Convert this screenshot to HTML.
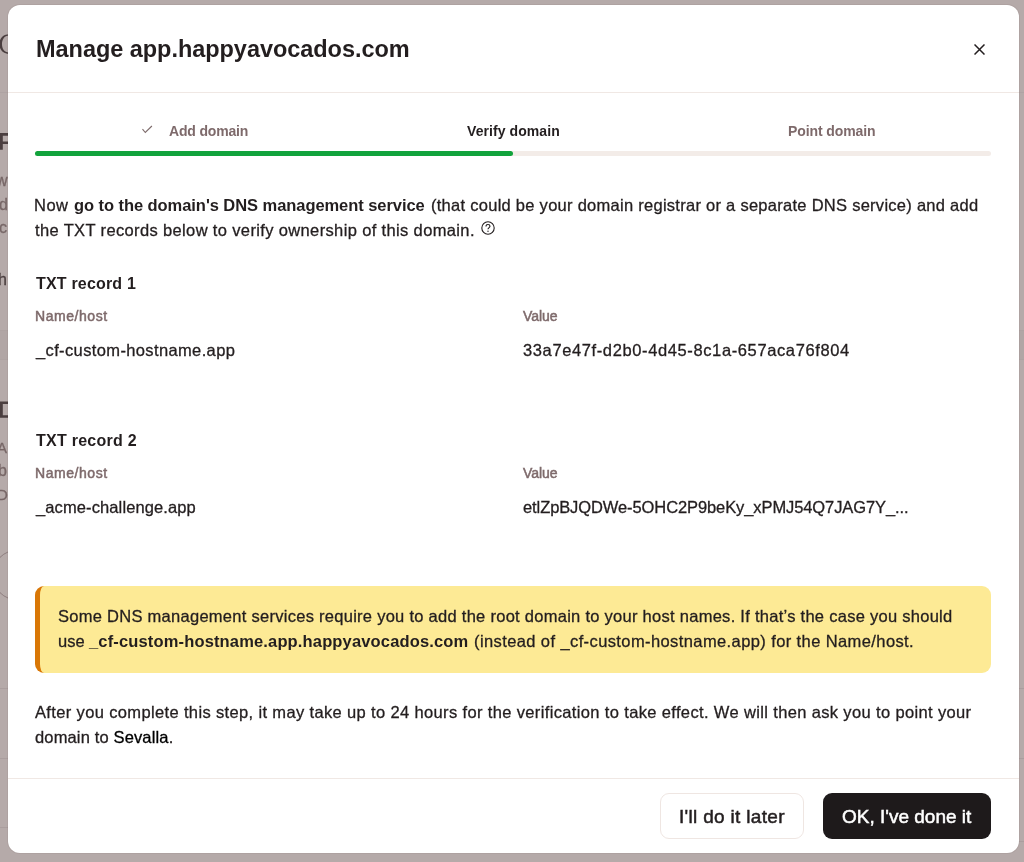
<!DOCTYPE html>
<html><head><meta charset="utf-8">
<style>
html,body{margin:0;padding:0;width:1024px;height:862px;overflow:hidden;background:#b5aaa9;font-family:"Liberation Sans",sans-serif;}
.abs{position:absolute;white-space:nowrap;}
.bg{position:absolute;left:0;top:0;width:1024px;height:862px;}
.modal{position:absolute;left:8px;top:5px;width:1011px;height:848px;background:#fff;border-radius:12px;overflow:hidden;box-shadow:0 0 0 1px rgba(90,60,60,0.07);}
.t{position:absolute;white-space:nowrap;line-height:1;will-change:transform;}
.rg{font-weight:normal;-webkit-text-stroke:0.3px currentColor;}
.md{font-weight:normal;-webkit-text-stroke:0.5px currentColor;}
.bd{font-weight:bold;}
</style></head><body>
<div class="bg">
  <div class="abs" style="left:0;top:92px;width:1024px;height:1px;background:#aea3a3"></div>
  <div class="abs" style="left:0;top:330px;width:1024px;height:30px;background:#b1a6a5"></div>
  <div class="abs" style="left:0;top:330px;width:1024px;height:1px;background:#aea3a2"></div>
  <div class="abs" style="left:0;top:359px;width:1024px;height:1px;background:#aea3a2"></div>
  <div class="abs" style="left:0;top:688px;width:1024px;height:1px;background:#aa9e9e"></div>
  <div class="abs" style="left:0;top:758px;width:1024px;height:1px;background:#aa9e9e"></div>
  <div class="abs" style="left:0;top:827px;width:20px;height:1px;background:#aa9e9e"></div>
  <div class="abs" style="left:1000px;top:841px;width:24px;height:1px;background:#aa9e9e"></div>
  <svg class="abs" style="left:0;top:0" width="20" height="862" viewBox="0 0 20 862">
    <path d="M9 34.2C2.5 34.4 -0.6 39 -0.6 44S2.5 53.6 9 53.8V52.6C4.2 52.4 2 48.5 2 44S4.2 35.6 9 35.4Z" fill="#4a3e3f"/>
    <path d="M0 133H9V135.8H2.8V141.4H9V144H2.8V149.7H0Z" fill="#4a3e3f"/>
    <path d="M0 401.5H9V404H2.8V415.3H9V417.7H0Z" fill="#4a3e3f"/>
    <circle cx="17.7" cy="575" r="25" stroke="#8e7e7f" stroke-width="1" fill="none"/>
  </svg>
  <div class="abs" style="left:-4px;top:173px;font-size:16px;line-height:1;will-change:transform;-webkit-text-stroke:0.3px currentColor;color:#776767">w</div>
  <div class="abs" style="left:-1px;top:197px;font-size:16px;line-height:1;will-change:transform;-webkit-text-stroke:0.3px currentColor;color:#776767">d</div>
  <div class="abs" style="left:-1px;top:220px;font-size:16px;line-height:1;will-change:transform;-webkit-text-stroke:0.3px currentColor;color:#776767">c</div>
  <div class="abs" style="left:-2px;top:272px;font-size:16px;line-height:1;will-change:transform;-webkit-text-stroke:0.3px currentColor;color:#4a3e3f">h</div>
  <div class="abs" style="left:-3px;top:440px;font-size:15px;line-height:1;will-change:transform;-webkit-text-stroke:0.3px currentColor;color:#776767">A</div>
  <div class="abs" style="left:-2px;top:463px;font-size:16px;line-height:1;will-change:transform;-webkit-text-stroke:0.3px currentColor;color:#776767">b</div>
  <div class="abs" style="left:-3px;top:487px;font-size:15px;line-height:1;will-change:transform;-webkit-text-stroke:0.3px currentColor;color:#776767">D</div>
</div>
<div class="modal">
  <svg class="abs" style="left:966px;top:39px" width="11" height="11" viewBox="0 0 11 11"><path d="M0.5 0.5L10.5 10.5M10.5 0.5L0.5 10.5" stroke="#231e1f" stroke-width="1.5" fill="none"/></svg>
  <div class="abs" style="left:0;top:87px;width:1011px;height:1px;background:#f0e8e4"></div>
  <svg class="abs" style="left:134px;top:120px" width="11" height="9" viewBox="0 0 11 9"><path d="M0.5 4.2L3.3 7.5L9.9 1" stroke="#7f6d6d" stroke-width="1.15" fill="none"/></svg>
  <div class="abs" style="left:27px;top:146px;width:956px;height:5px;border-radius:3px;background:#f3ece8"></div>
  <div class="abs" style="left:27px;top:146px;width:478px;height:5px;border-radius:3px;background:#12a33c"></div>
  <svg class="abs" style="left:472.5px;top:216.3px" width="14" height="14" viewBox="0 0 14 14"><circle cx="7" cy="7" r="6.2" stroke="#231e1f" stroke-width="1.1" fill="none"/><path d="M5 5.4C5 4.2 5.9 3.5 7 3.5S9 4.2 9 5.3C9 6.5 7 6.7 7 8.3" stroke="#231e1f" stroke-width="1.1" fill="none"/><circle cx="7" cy="10.2" r="0.7" fill="#231e1f"/></svg>
  <div class="abs" style="left:27px;top:581px;width:951px;height:87px;border-radius:9px;background:#fdea95;border-left:5px solid #d97706"></div>
  <div class="abs" style="left:0;top:773px;width:1011px;height:1px;background:#f0e8e4"></div>
  <div class="abs" style="left:652px;top:788px;width:142px;height:44px;border:1px solid #efe6e2;border-radius:9px;background:#fff"></div>
  <div class="abs" style="left:815px;top:788px;width:168px;height:46px;border-radius:9px;background:#1e1a1b"></div>
  <div class="t bd" id="title" style="left:27.61px;top:32.61px;font-size:23.5px;color:#231e1f;letter-spacing:-0.041px">Manage app.happyavocados.com</div>
  <div class="t bd" id="s1" style="left:160.62px;top:118.91px;font-size:14px;color:#7e6a6b;letter-spacing:-0.179px">Add domain</div>
  <div class="t bd" id="s2" style="left:459.00px;top:118.91px;font-size:14px;color:#231e1f;letter-spacing:0.075px">Verify domain</div>
  <div class="t bd" id="s3" style="left:779.59px;top:118.91px;font-size:14px;color:#7e6a6b;letter-spacing:-0.106px">Point domain</div>
  <div class="t rg" id="p1a" style="left:26.40px;top:191.61px;font-size:16.5px;color:#231e1f;letter-spacing:0.470px">Now</div>
  <div class="t bd" id="p1b" style="left:66.30px;top:191.61px;font-size:16.5px;color:#231e1f;letter-spacing:-0.064px">go to the domain's DNS management service</div>
  <div class="t rg" id="p1c" style="left:422.54px;top:191.61px;font-size:16.5px;color:#231e1f;letter-spacing:0.270px">(that could be your domain registrar or a separate DNS service) and add</div>
  <div class="t rg" id="p2" style="left:27.25px;top:216.81px;font-size:16.5px;color:#231e1f;letter-spacing:0.358px">the TXT records below to verify ownership of this domain.</div>
  <div class="t bd" id="r1" style="left:28.00px;top:270.91px;font-size:16px;color:#231e1f;letter-spacing:0.181px">TXT record 1</div>
  <div class="t md" id="n1" style="left:26.58px;top:303.90px;font-size:14px;color:#7e6a6b;letter-spacing:0.547px">Name/host</div>
  <div class="t md" id="v1" style="left:515.00px;top:303.90px;font-size:14px;color:#7e6a6b;letter-spacing:-0.030px">Value</div>
  <div class="t rg" id="nv1" style="left:28.28px;top:336.81px;font-size:16.5px;color:#231e1f;letter-spacing:0.369px">_cf-custom-hostname.app</div>
  <div class="t rg" id="vv1" style="left:515.00px;top:337.10px;font-size:16.5px;color:#231e1f;letter-spacing:0.617px">33a7e47f-d2b0-4d45-8c1a-657aca76f804</div>
  <div class="t bd" id="r2" style="left:28.00px;top:428.11px;font-size:16px;color:#231e1f;letter-spacing:0.263px">TXT record 2</div>
  <div class="t md" id="n2" style="left:26.58px;top:460.81px;font-size:14px;color:#7e6a6b;letter-spacing:0.547px">Name/host</div>
  <div class="t md" id="v2" style="left:515.00px;top:460.81px;font-size:14px;color:#7e6a6b;letter-spacing:-0.030px">Value</div>
  <div class="t rg" id="nv2" style="left:28.28px;top:493.60px;font-size:16.5px;color:#231e1f;letter-spacing:0.111px">_acme-challenge.app</div>
  <div class="t rg" id="vv2" style="left:515.00px;top:493.81px;font-size:16.5px;color:#231e1f;letter-spacing:-0.095px">etlZpBJQDWe-5OHC2P9beKy_xPMJ54Q7JAG7Y_...</div>
  <div class="t rg" id="w1" style="left:49.72px;top:602.91px;font-size:16.5px;color:#231e1f;letter-spacing:0.273px">Some DNS management services require you to add the root domain to your host names. If that’s the case you should</div>
  <div class="t rg" id="w2a" style="left:49.54px;top:627.91px;font-size:16.5px;color:#231e1f;letter-spacing:0.080px">use</div>
  <div class="t bd" id="w2b" style="left:81.00px;top:627.91px;font-size:16.5px;color:#231e1f;letter-spacing:0.151px">_cf-custom-hostname.app.happyavocados.com</div>
  <div class="t rg" id="w2c" style="left:465.52px;top:627.91px;font-size:16.5px;color:#231e1f;letter-spacing:0.398px">(instead of _cf-custom-hostname.app) for the Name/host.</div>
  <div class="t rg" id="a1" style="left:27.25px;top:699.01px;font-size:16.5px;color:#231e1f;letter-spacing:0.356px">After you complete this step, it may take up to 24 hours for the verification to take effect. We will then ask you to point your</div>
  <div class="t rg" id="a2" style="left:27.25px;top:724.41px;font-size:16.5px;color:#231e1f;letter-spacing:0.144px">domain to <span style="color:#000">Sevalla</span>.</div>
  <div class="t md" id="b1" style="left:671.10px;top:801.51px;font-size:19px;color:#231e1f;letter-spacing:0.313px">I'll do it later</div>
  <div class="t md" id="b2" style="left:834.00px;top:801.51px;font-size:19px;color:#fff;letter-spacing:0.000px">OK, I've done it</div>
</div>
</body></html>
